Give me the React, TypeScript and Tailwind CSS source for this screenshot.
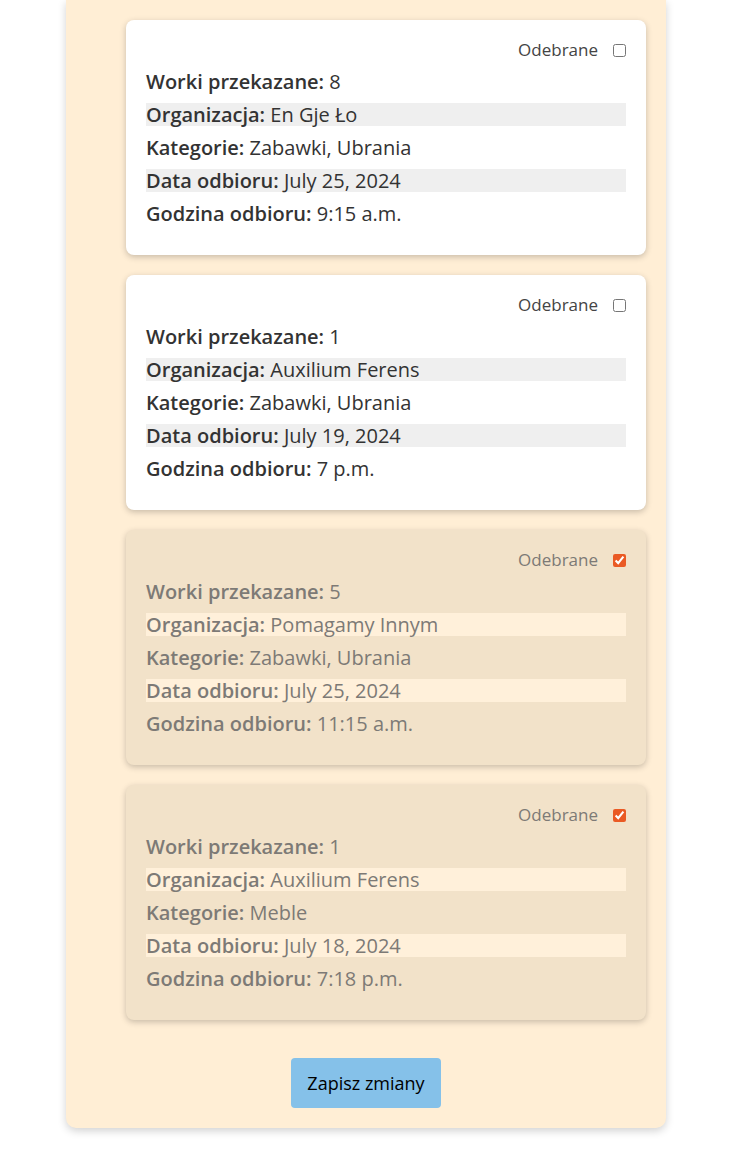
const pickups = [
  { bags: 8, org: "En Gje Ło", cats: "Zabawki, Ubrania", date: "July 25, 2024", time: "9:15 a.m.", done: false },
  { bags: 1, org: "Auxilium Ferens", cats: "Zabawki, Ubrania", date: "July 19, 2024", time: "7 p.m.", done: false },
  { bags: 5, org: "Pomagamy Innym", cats: "Zabawki, Ubrania", date: "July 25, 2024", time: "11:15 a.m.", done: true },
  { bags: 1, org: "Auxilium Ferens", cats: "Meble", date: "July 18, 2024", time: "7:18 p.m.", done: true },
];

function Row({ label, value, shaded, done }: { label: string; value: string | number; shaded?: boolean; done: boolean }) {
  const bg = shaded ? (done ? "bg-[#fff0da]" : "bg-[#efefef]") : "";
  return (
    <p className={`mb-[10px] h-[23px] text-[20px] leading-[23px] ${bg}`}>
      <span className="font-semibold">{label}</span> {value}
    </p>
  );
}

export default function App() {
  return (
    <div className="min-h-[1171px] bg-white font-['Open_Sans',sans-serif]">
      <div className="ml-[66px] w-[600px] rounded-b-[10px] bg-[#ffeed5] pb-[20px] pl-[60px] pr-[20px] shadow-[0_3px_8px_rgba(0,0,0,0.18)]">
        <div className="h-0 rounded-[8px] shadow-[0_2px_8px_rgba(0,0,0,0.25)]" />
        <div className="flex flex-col gap-[20px] pt-[20px]">
          {pickups.map((p, i) => (
            <div
              key={i}
              className={`rounded-[8px] px-[20px] pb-[20px] pt-[20px] shadow-[0_2px_6px_rgba(0,0,0,0.22)] ${
                p.done ? "bg-[#f2e2c9] text-[#7d7a76]" : "bg-white text-[#333333]"
              }`}
            >
              <label className="flex h-[20px] items-center justify-end gap-[15px] text-[17px]">
                <span className={p.done ? "text-[#7d7a76]" : "text-[#444444]"}>Odebrane</span>
                <input
                  type="checkbox"
                  defaultChecked={p.done}
                  className="m-0 h-[13px] w-[13px] accent-[#ea5a24]"
                />
              </label>
              <div className="mt-[10px]">
                <Row label="Worki przekazane:" value={p.bags} done={p.done} />
                <Row label="Organizacja:" value={p.org} shaded done={p.done} />
                <Row label="Kategorie:" value={p.cats} done={p.done} />
                <Row label="Data odbioru:" value={p.date} shaded done={p.done} />
                <Row label="Godzina odbioru:" value={p.time} done={p.done} />
              </div>
            </div>
          ))}
        </div>
        <div className="mt-[38px] flex justify-center pr-[40px]">
          <button className="h-[50px] w-[150px] rounded-[4px] bg-[#85c1e9] text-[18px] text-black">
            Zapisz zmiany
          </button>
        </div>
      </div>
    </div>
  );
}
